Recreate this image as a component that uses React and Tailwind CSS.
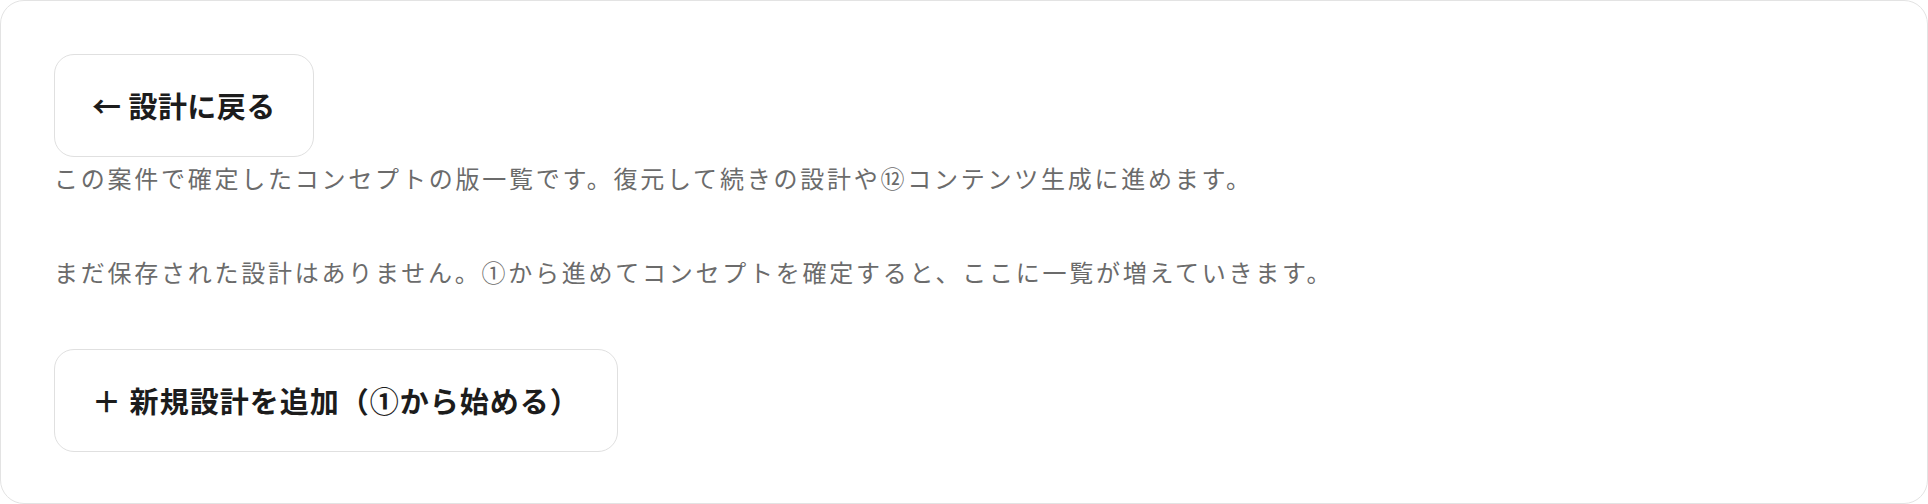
import React from "react";

const font = { fontFamily: '"Noto Sans CJK JP", "Noto Sans", sans-serif' };

export default function App() {
  return (
    <div className="w-[1928px] h-[504px] bg-white" style={font}>
      <div className="h-full rounded-3xl border border-[#e3e3e3] bg-white px-[53px] pt-[53px]">
        <button className="block rounded-[20px] border border-[#e0e0e0] bg-white px-[37px] py-7 text-[29px] font-bold leading-[1.55] tracking-[0.015em] text-[#1c1c1c]">
          ← 設計に戻る
        </button>

        <p className="mt-[2px] text-[24px] leading-[38px] tracking-[0.115em] text-[#6b6b6b]">
          この案件で確定したコンセプトの版一覧です。復元して続きの設計や⑫コンテンツ生成に進めます。
        </p>

        <p className="mt-[56px] text-[24px] leading-[38px] tracking-[0.115em] text-[#6b6b6b]">
          まだ保存された設計はありません。①から進めてコンセプトを確定すると、ここに一覧が増えていきます。
        </p>

        <button className="mt-[58px] block rounded-[20px] border border-[#e0e0e0] bg-white px-[37px] py-7 text-[29px] font-bold leading-[1.55] tracking-[0.035em] text-[#1c1c1c]">
          ＋ 新規設計を追加（①から始める）
        </button>
      </div>
    </div>
  );
}
